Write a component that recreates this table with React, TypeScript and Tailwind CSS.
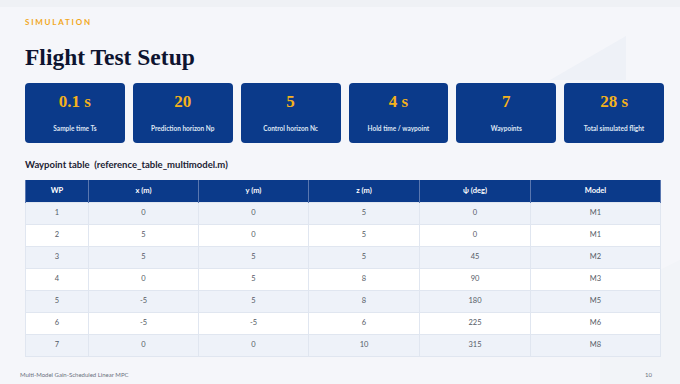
const stats = [
  { value: '0.1 s', label: 'Sample time Ts' },
  { value: '20', label: 'Prediction horizon Np' },
  { value: '5', label: 'Control horizon Nc' },
  { value: '4 s', label: 'Hold time / waypoint' },
  { value: '7', label: 'Waypoints' },
  { value: '28 s', label: 'Total simulated flight' },
];

const columns = ['WP', 'x (m)', 'y (m)', 'z (m)', 'ψ (deg)', 'Model'];

const rows = [
  ['1', '0', '0', '5', '0', 'M1'],
  ['2', '5', '0', '5', '0', 'M1'],
  ['3', '5', '5', '5', '45', 'M2'],
  ['4', '0', '5', '8', '90', 'M3'],
  ['5', '-5', '5', '8', '180', 'M5'],
  ['6', '-5', '-5', '6', '225', 'M6'],
  ['7', '0', '0', '10', '315', 'M8'],
];

const colWidths = ['w-[63px]', 'w-[110px]', 'w-[110px]', 'w-[111px]', 'w-[111px]', ''];

export default function App() {
  return (
    <div className="relative w-[680px] h-[384px] overflow-hidden bg-[#f5f6fa] font-['Lato',sans-serif]">
      {/* faint backdrop shape */}
      <svg className="absolute left-0 top-0" width="680" height="384" viewBox="0 0 680 384">
        <rect x="0" y="0" width="680" height="7" fill="#eff1f5" />
        <polygon points="550,80 626,36 626,80" fill="#eef1f7" />
        <polygon points="600,300 680,260 680,384 600,384" fill="#f2f4f8" />
      </svg>

      <div className="relative flex flex-col h-full px-[25px] pt-[17px]">
        <div className="text-[8px] leading-[10px] font-bold tracking-[0.22em] text-[#f2a81d]">SIMULATION</div>
        <h1 className="mt-[16px] text-[23.5px] leading-[28px] font-bold text-[#0e1430] font-['Liberation_Serif',serif]">
          Flight Test Setup
        </h1>

        <div className="mt-[12px] grid grid-cols-6 gap-[8px] w-[639px]">
          {stats.map((s) => (
            <div key={s.label} className="h-[60px] rounded-[4px] bg-[#0b3a8a] flex flex-col items-center">
              <div className="mt-[9px] text-[17px] leading-[20px] font-bold text-[#f5b21b] font-['Liberation_Serif',serif]">
                {s.value}
              </div>
              <div className="mt-[12px] text-[6.5px] leading-[9px] font-bold text-[#dfe6f3]">{s.label}</div>
            </div>
          ))}
        </div>

        <div className="mt-[16px] text-[9.5px] leading-[12px] font-bold text-[#1b2233]">
          Waypoint table&nbsp; (reference_table_multimodel.m)
        </div>

        <table className="mt-[9px] w-[636px] border-collapse table-fixed text-center">
          <thead>
            <tr className="h-[22px] bg-[#0b3a8a]">
              {columns.map((c, i) => (
                <th
                  key={c}
                  className={`${colWidths[i]} border-x border-[#5a77b0] text-[7.5px] font-bold text-white`}
                >
                  {c}
                </th>
              ))}
            </tr>
          </thead>
          <tbody>
            {rows.map((r, ri) => (
              <tr key={ri} className={`h-[22px] ${ri % 2 === 0 ? 'bg-[#eef2f9]' : 'bg-white'}`}>
                {r.map((v, ci) => (
                  <td key={ci} className="border border-[#e0e6f0] text-[7.5px] text-[#555b66]">
                    {v}
                  </td>
                ))}
              </tr>
            ))}
          </tbody>
        </table>

        <div className="mt-auto mb-[5px] flex justify-between text-[6px] text-[#6b7080] -mx-[5px]">
          <span>Multi-Model Gain-Scheduled Linear MPC</span>
          <span className="mr-[8px]">10</span>
        </div>
      </div>
    </div>
  );
}
